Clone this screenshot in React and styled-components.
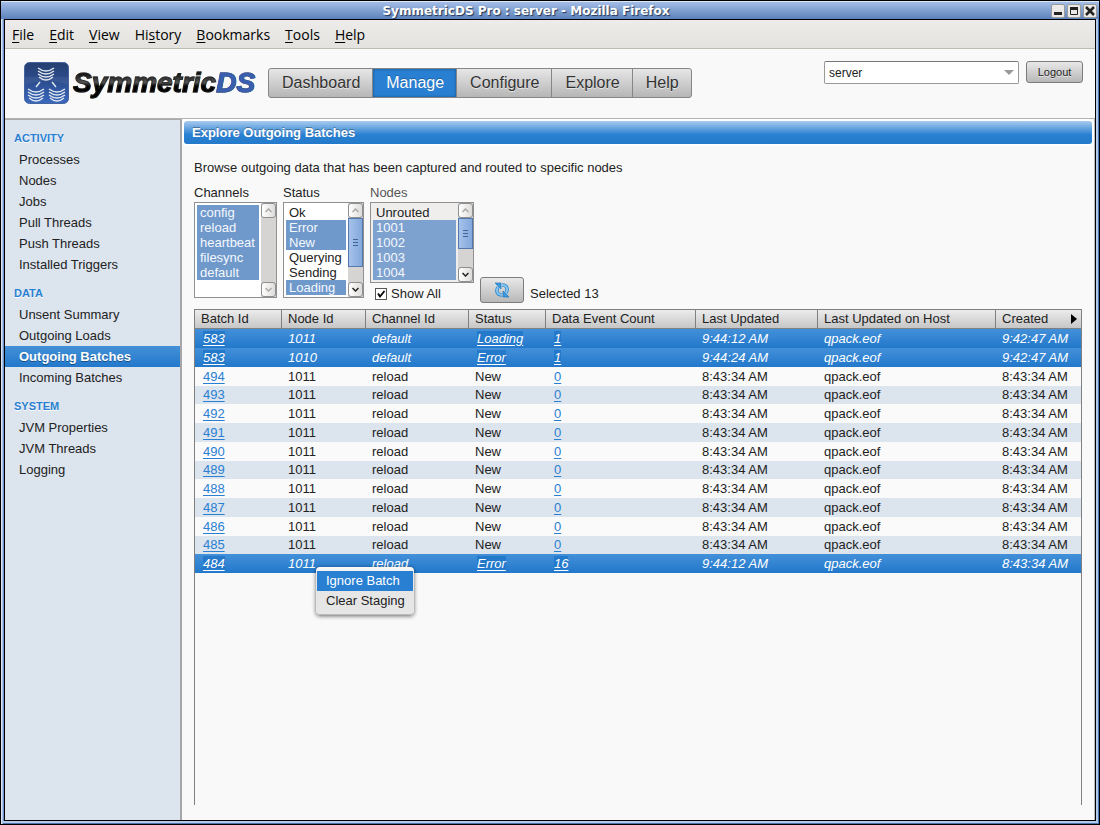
import React from "react";
import styled, { createGlobalStyle, css } from "styled-components";

const Global = createGlobalStyle`
  *, *::before, *::after { box-sizing: border-box; }
  body { margin: 0; font: 13px/18px "Liberation Sans", Arial, sans-serif; color: #222; }
  button, select, input { font: inherit; color: inherit; margin: 0; }
`;

const Frame = styled.div`
  min-height: 100vh;
  display: flex;
  flex-direction: column;
  background: #6f93c8;
  border: 1px solid #000;
  padding: 0 3px 3px;
  box-shadow: inset 1px 1px #dbe6f6, inset 2px 0 #a9c1e4, inset 0 -1px #4c72aa, inset -1px 0 #4c72aa, inset 0 -3px #b3caea, inset -3px 0 #b3caea;
`;
const TitleBar = styled.header`
  height: 18px;
  margin: 0 -3px;
  padding: 0 2px;
  display: grid;
  grid-template-columns: 48px 1fr 48px;
  align-items: center;
  border-top: 1px solid #dbe6f6;
  background: linear-gradient(#a3bde6, #5c82bb);
`;
const WindowTitle = styled.h1`
  grid-column: 2;
  margin: 0;
  padding-right: 48px;
  font: bold 12px/16px "DejaVu Sans", sans-serif;
  color: #fff;
  text-align: center;
  text-shadow: 1px 1px 1px #1d3557;
`;
const WindowButtons = styled.div`
  display: flex;
  gap: 2px;
  justify-content: flex-end;
`;
const WindowButton = styled.button`
  width: 14px;
  height: 14px;
  padding: 0;
  display: grid;
  place-items: center;
  border: 1px solid #9a9a9a;
  border-radius: 2px;
  background: #eceae8;
`;
const Content = styled.div`
  flex: 1;
  display: flex;
  flex-direction: column;
  border: 1px solid #000;
  background: #f9f9f9;
`;
const MenuBar = styled.nav`
  height: 29px;
  padding: 2px 7px 0;
  display: flex;
  align-items: center;
  gap: 15px;
  background: linear-gradient(#edecea, #e3e2df);
  border-bottom: 1px solid #bdbdb4;
`;
const MenuButton = styled.button`
  padding: 0;
  border: 0;
  background: none;
  font: 14px/18px "Open Sans", sans-serif;
  color: #000;
  u { text-underline-offset: 2px; }
`;
const AppHeader = styled.header`
  height: 70px;
  padding: 12px 12px 0 19px;
  display: flex;
  align-items: flex-start;
  border-bottom: 1px solid #b0b3b0;
`;
const Brand = styled.a`
  width: 244px;
  padding-top: 1px;
  display: flex;
  align-items: center;
  gap: 3px;
  text-decoration: none;
  svg { flex: none; }
`;
const BrandText = styled.span`
  font: italic bold 28px/32px "Liberation Sans", Arial, sans-serif;
  color: transparent;
  background: linear-gradient(#111 20%, #555 48%, #000 60%);
  background-clip: text;
  -webkit-text-stroke: 1px #222a;
`;
const BrandAccent = styled.span`
  color: #3a5fae;
  -webkit-text-stroke: 1px #3a5fae;
`;
const Tabs = styled.nav`
  display: flex;
  margin-top: 7px;
  border: 1px solid #868686;
  border-radius: 3px;
  background: linear-gradient(#e6e6e6, #b6b6b6);
`;
const Tab = styled.button`
  height: 28px;
  padding: 0 12px 0 13px;
  border: 0;
  border-right: 1px solid #868686;
  background: none;
  font-size: 16px;
  color: #333;
  text-shadow: 0 1px #fff9;
  &:last-child { border-right: 0; }
  ${(p) => p.$active && css`
    color: #fff;
    background: #2980d2;
    box-shadow: inset 0 0 3px #134f8c;
    text-shadow: 0 -1px #0004;
  `}
`;
const Session = styled.div`
  margin-left: auto;
  display: flex;
  gap: 7px;
`;
const Combo = styled.label`
  display: grid;
  align-items: center;
  > * { grid-area: 1 / 1; }
  svg { justify-self: end; margin-right: 5px; pointer-events: none; }
`;
const ComboSelect = styled.select`
  appearance: none;
  width: 195px;
  height: 23px;
  padding: 0 20px 0 4px;
  border: 1px solid #999;
  border-top-color: #777;
  border-radius: 2px;
  background: #fff;
  font-size: 12px;
`;
const PushButton = styled.button`
  width: ${(p) => p.$width};
  height: ${(p) => p.$height};
  padding: 0;
  display: grid;
  place-items: center;
  border: 1px solid #7c7c7c;
  border-radius: 3px;
  background: linear-gradient(#e8e8e8, #b8b8b8);
  font-size: 11px;
  text-shadow: 0 1px #fff9;
`;
const Body = styled.div`
  flex: 1;
  display: flex;
`;
const Sidebar = styled.nav`
  flex: none;
  width: 177px;
  background: #dce4ed;
  border-top: 1px solid #aaa;
  border-right: 2px solid #a4a6a8;
`;
const SideHeading = styled.h2`
  margin: 0;
  padding: 9px 9px 2px;
  font-size: 11px;
  line-height: 18px;
  color: #2980d2;
  text-shadow: 0 1px #fff;
`;
const SideLink = styled.a`
  display: block;
  padding: 0 14px;
  line-height: 21px;
  color: #222;
  text-decoration: none;
  ${(p) => p.$active && css`
    color: #fff;
    font-weight: bold;
    background: linear-gradient(#4490d8, #2278cb);
    text-shadow: 0 1px #0006;
  `}
`;
const Main = styled.main`
  flex: 1;
  min-width: 0;
  display: flex;
  flex-direction: column;
  padding: 2px 2px 15px;
  border-right: 1px solid #bbb;
`;
const PanelTitle = styled.h2`
  margin: 0;
  padding: 0 8px;
  font-size: 13px;
  line-height: 23px;
  color: #fff;
  text-shadow: 0 -1px #0005;
  border-radius: 3px;
  background: linear-gradient(#a8cbee, #2980d2 60%, #2479ca);
  box-shadow: 0 0 0 2px #fff;
`;
const PanelBody = styled.div`
  flex: 1;
  display: flex;
  flex-direction: column;
  padding: 15px 10px 0;
`;
const Intro = styled.p`
  margin: 0 0 6px;
`;
const Filters = styled.div`
  height: 120px;
  margin-bottom: 6px;
  display: flex;
  gap: 6px;
`;
const FilterGroup = styled.div`
  width: ${(p) => p.$width};
`;
const FilterLabel = styled.label`
  display: block;
  height: 19px;
  line-height: 20px;
  color: ${(p) => (p.$disabled ? "#555" : "#222")};
`;
const ListFrame = styled.div`
  height: ${(p) => p.$height};
  display: flex;
  border: 1px solid #909090;
  background: ${(p) => (p.$disabled ? "#efeeed" : "#fff")};
`;
const List = styled.select`
  flex: 1;
  min-width: 0;
  height: 100%;
  padding: 2px 2px 0;
  border: 0;
  outline: 0;
  overflow: hidden;
  background: transparent;
  scrollbar-width: none;
  option {
    min-height: 15px;
    height: 15px;
    padding: 0 3px;
    line-height: 15px;
    color: #222;
  }
  option:checked {
    color: #fff;
    -webkit-text-fill-color: #f4f8fd;
    background: ${(p) => (p.$disabled ? "linear-gradient(#7ea2d0, #7ea2d0)" : "linear-gradient(#7099cb, #7099cb)")};
  }
`;
const Track = styled.div`
  flex: none;
  width: 15px;
  display: flex;
  flex-direction: column;
  justify-content: space-between;
  background: #d5d4d2;
`;
const ArrowBox = styled.button`
  height: 15px;
  padding: 0;
  display: grid;
  place-items: center;
  border: 1px solid #8f8f8f;
  border-radius: 3px;
  background: linear-gradient(90deg, #fff, #dedcda);
`;
const Thumb = styled.div`
  height: ${(p) => p.$height};
  margin-bottom: auto;
  display: grid;
  place-items: center;
  border: 1px solid #5379ae;
  background: linear-gradient(90deg, #a5c2ea, #83a8dc);
`;
const CheckLabel = styled.label`
  display: flex;
  align-items: center;
  gap: 4px;
  margin-top: 2px;
  padding-left: 5px;
`;
const CheckBox = styled.span`
  display: grid;
  > * { grid-area: 1 / 1; }
  svg { pointer-events: none; }
`;
const CheckInput = styled.input`
  appearance: none;
  width: 12px;
  height: 12px;
  border: 1px solid #555;
  background: #fff;
`;
const Actions = styled.div`
  display: flex;
  align-items: flex-end;
  gap: 6px;
`;
const TableFrame = styled.div`
  flex: 1;
  border: 1px solid #808080;
  border-bottom: 0;
`;
const Table = styled.table`
  width: 100%;
  table-layout: fixed;
  border-collapse: separate;
  border-spacing: 0;
`;
const HeadCell = styled.th`
  width: ${(p) => p.$width};
  height: 19px;
  padding: 0 0 0 6px;
  text-align: left;
  font-weight: normal;
  line-height: 18px;
  white-space: nowrap;
  border-right: 1px solid #808080;
  border-bottom: 1px solid #808080;
  background: linear-gradient(#ececec, #c6c6c6);
  &:last-child { border-right: 0; }
`;
const HeadRow = styled.div`
  display: flex;
  align-items: center;
  justify-content: space-between;
  padding-right: 4px;
`;
const Row = styled.tr`
  height: 19px;
  background: #fafafa;
  &:nth-child(even) { background: #dce4ed; }
  &:nth-child(4n) { height: 18px; }
  ${(p) => p.$selected && css`
    &&& { background: linear-gradient(#4390d9, #2278cb); }
    color: #fff;
    font-style: italic;
    --link: #fff;
    --link-bg: #2479cb;
  `}
`;
const Cell = styled.td`
  position: relative;
  padding: 0 0 0 6px;
  line-height: 18px;
  white-space: nowrap;
`;
const CellLink = styled.a`
  margin-left: 2px;
  color: var(--link, #2980d2);
  background: var(--link-bg, transparent);
  text-underline-offset: 2px;
`;
const ContextMenu = styled.div`
  position: absolute;
  z-index: 1;
  top: 13px;
  left: 34px;
  width: 98px;
  padding: 4px 1px 3px;
  border-bottom: 1px solid #bbb;
  border-radius: 4px;
  background: linear-gradient(#fafafa, #e6e6e6 8px);
  box-shadow: 0 1px 4px #0009;
  font-style: normal;
`;
const ContextItem = styled.button`
  display: block;
  width: 100%;
  height: 20px;
  padding: 0 9px;
  border: 0;
  text-align: left;
  color: ${(p) => (p.$active ? "#fff" : "#222")};
  background: ${(p) => (p.$active ? "#2980d2" : "none")};
`;

const arcs = (x, y) =>
  [0, 3, 6, 9].map((d) => {
    const half = d > 6 ? 7 : 8;
    return <path key={d} d={`M${x - half} ${y + d}q${half} 6 ${half * 2} 0`} />;
  });

function LogoMark() {
  return (
    <svg width="46" height="42" viewBox="0 0 46 42" aria-hidden="true">
      <defs>
        <linearGradient id="mark" x2="0" y2="1">
          <stop offset="0" stopColor="#263f70" />
          <stop offset=".5" stopColor="#2d4f92" />
          <stop offset="1" stopColor="#3b69bf" />
        </linearGradient>
      </defs>
      <rect x=".5" y=".5" width="44" height="41" rx="5" fill="url(#mark)" stroke="#45639c" />
      <path d="M1 23q22-8 43 0v-8H1z" fill="#fff" opacity=".06" />
      <g fill="none" stroke="#e3e9ee" strokeWidth="1.4">
        {arcs(22, 6)}
        {arcs(12, 27)}
        {arcs(33, 27)}
        <path d="M16 20l-4 5M28 20l4 5" />
      </g>
    </svg>
  );
}

function Chevron({ up, dim }) {
  return (
    <svg width="7" height="5" viewBox="0 0 7 5" aria-hidden="true">
      <path d={up ? "M.5 4l3-3 3 3" : "M.5 1l3 3 3-3"} fill="none" stroke={dim ? "#aaa" : "#222"} strokeWidth="1.5" />
    </svg>
  );
}

function ListBox({ id, label, width, height = "96px", options, selected, thumb, disabled, children }) {
  return (
    <FilterGroup $width={width}>
      <FilterLabel htmlFor={id} $disabled={disabled}>{label}</FilterLabel>
      <ListFrame $height={height} $disabled={disabled}>
        <List id={id} multiple size={5} defaultValue={selected} $disabled={disabled}>
          {options.map((o) => <option key={o}>{o}</option>)}
        </List>
        <Track>
          <ArrowBox aria-label="Scroll up"><Chevron up dim /></ArrowBox>
          {thumb && (
            <Thumb $height={thumb}>
              <svg width="5" height="7" viewBox="0 0 5 7" aria-hidden="true">
                <path d="M0 .5h5M0 3.5h5M0 6.5h5" stroke="#41659a" />
              </svg>
            </Thumb>
          )}
          <ArrowBox aria-label="Scroll down"><Chevron dim={!thumb} /></ArrowBox>
        </Track>
      </ListFrame>
      {children}
    </FilterGroup>
  );
}

const menus = [["", "F", "ile"], ["", "E", "dit"], ["", "V", "iew"], ["Hi", "s", "tory"], ["", "B", "ookmarks"], ["", "T", "ools"], ["", "H", "elp"]];
const tabs = ["Dashboard", "Manage", "Configure", "Explore", "Help"];
const sections = [
  ["ACTIVITY", ["Processes", "Nodes", "Jobs", "Pull Threads", "Push Threads", "Installed Triggers"]],
  ["DATA", ["Unsent Summary", "Outgoing Loads", "Outgoing Batches", "Incoming Batches"]],
  ["SYSTEM", ["JVM Properties", "JVM Threads", "Logging"]],
];
const columns = [
  ["Batch Id", "87px"], ["Node Id", "84px"], ["Channel Id", "103px"], ["Status", "77px"],
  ["Data Event Count", "150px"], ["Last Updated", "122px"], ["Last Updated on Host", "178px"], ["Created", "auto"],
];
const batches = [
  { id: 583, node: 1011, channel: "default", status: "Loading", count: 1, updated: "9:44:12 AM", created: "9:42:47 AM", selected: true },
  { id: 583, node: 1010, channel: "default", status: "Error", count: 1, updated: "9:44:24 AM", created: "9:42:47 AM", selected: true },
  ...[494, 493, 492, 491, 490, 489, 488, 487, 486, 485].map((id) => ({
    id, node: 1011, channel: "reload", status: "New", count: 0, updated: "8:43:34 AM", created: "8:43:34 AM",
  })),
  { id: 484, node: 1011, channel: "reload", status: "Error", count: 16, updated: "9:44:12 AM", created: "8:43:34 AM", selected: true, menu: true },
];

export default function App() {
  return (
    <Frame>
      <Global />
      <TitleBar>
        <WindowTitle>SymmetricDS Pro : server - Mozilla Firefox</WindowTitle>
        <WindowButtons>
          <WindowButton aria-label="Minimize">
            <svg width="10" height="10"><path d="M1 7.5h8" stroke="#222" strokeWidth="3" /></svg>
          </WindowButton>
          <WindowButton aria-label="Maximize">
            <svg width="10" height="10"><path d="M1.5 2v6.500h7V2" fill="none" stroke="#222" /><path d="M1 2.500h8" stroke="#222" strokeWidth="3" /></svg>
          </WindowButton>
          <WindowButton aria-label="Close">
            <svg width="10" height="10"><path d="M1 1l8 8M9 1L1 9" stroke="#222" strokeWidth="2.500" /></svg>
          </WindowButton>
        </WindowButtons>
      </TitleBar>
      <Content>
        <MenuBar>
          {menus.map(([a, u, b]) => <MenuButton key={u + b}>{a}<u>{u}</u>{b}</MenuButton>)}
        </MenuBar>
        <AppHeader>
          <Brand href="#home">
            <LogoMark />
            <BrandText>Symmetric<BrandAccent>DS</BrandAccent></BrandText>
          </Brand>
          <Tabs>
            {tabs.map((t) => <Tab key={t} $active={t === "Manage"}>{t}</Tab>)}
          </Tabs>
          <Session>
            <Combo>
              <ComboSelect aria-label="Server" defaultValue="server"><option>server</option></ComboSelect>
              <svg width="10" height="5" aria-hidden="true"><path d="M0 0h10L5 5z" fill="#999" /></svg>
            </Combo>
            <PushButton $width="57px" $height="22px">Logout</PushButton>
          </Session>
        </AppHeader>
        <Body>
          <Sidebar>
            {sections.map(([title, items]) => (
              <React.Fragment key={title}>
                <SideHeading>{title}</SideHeading>
                {items.map((i) => <SideLink key={i} href="#view" $active={i === "Outgoing Batches"}>{i}</SideLink>)}
              </React.Fragment>
            ))}
          </Sidebar>
          <Main>
            <PanelTitle>Explore Outgoing Batches</PanelTitle>
            <PanelBody>
              <Intro>Browse outgoing data that has been captured and routed to specific nodes</Intro>
              <Filters>
                <ListBox id="channels" label="Channels" width="83px"
                  options={["config", "reload", "heartbeat", "filesync", "default"]}
                  selected={["config", "reload", "heartbeat", "filesync", "default"]} />
                <ListBox id="status" label="Status" width="81px" thumb="49px"
                  options={["Ok", "Error", "New", "Querying", "Sending", "Loading"]}
                  selected={["Error", "New", "Loading"]} />
                <ListBox id="nodes" label="Nodes" width="104px" height="81px" thumb="31px" disabled
                  options={["Unrouted", "1001", "1002", "1003", "1004"]}
                  selected={["1001", "1002", "1003", "1004"]}>
                  <CheckLabel>
                    <CheckBox>
                      <CheckInput type="checkbox" defaultChecked />
                      <svg width="12" height="12" aria-hidden="true"><path d="M3 5.500l2 3L9.500 3" fill="none" stroke="#000" strokeWidth="1.800" /></svg>
                    </CheckBox>
                    Show All
                  </CheckLabel>
                </ListBox>
                <Actions>
                  <PushButton $width="44px" $height="26px" aria-label="Refresh">
                    <svg width="16" height="16" viewBox="0 0 16 16" aria-hidden="true">
                      <g fill="none" stroke="#2f8bd0" strokeWidth="3.500">
                        <path d="M8 13C3.500 13 1.500 9.500 4 5" />
                        <path d="M8 3c4.500 0 6.500 3.500 4 8" />
                      </g>
                      <g fill="none" stroke="#8bc6ee" strokeWidth="1.800">
                        <path d="M8 13C3.500 13 1.500 9.500 4 5" />
                        <path d="M8 3c4.500 0 6.500 3.500 4 8" />
                      </g>
                      <path d="M1 1h6v6zM15 15H9V9z" fill="#3a9be0" stroke="#1f78bd" strokeWidth=".7" />
                    </svg>
                  </PushButton>
                  <span>Selected 13</span>
                </Actions>
              </Filters>
              <TableFrame>
                <Table>
                  <thead>
                    <tr>
                      {columns.map(([name, width]) => (
                        <HeadCell key={name} $width={width}>
                          {name === "Created" ? (
                            <HeadRow>
                              {name}
                              <svg width="6" height="10" aria-hidden="true"><path d="M0 0l6 5-6 5z" /></svg>
                            </HeadRow>
                          ) : name}
                        </HeadCell>
                      ))}
                    </tr>
                  </thead>
                  <tbody>
                    {batches.map((b, i) => (
                      <Row key={i} $selected={b.selected}>
                        <Cell><CellLink href="#batch">{b.id}</CellLink></Cell>
                        <Cell>
                          {b.node}
                          {b.menu && (
                            <ContextMenu>
                              <ContextItem $active>Ignore Batch</ContextItem>
                              <ContextItem>Clear Staging</ContextItem>
                            </ContextMenu>
                          )}
                        </Cell>
                        <Cell>{b.channel}</Cell>
                        <Cell>{b.selected ? <CellLink href="#status">{b.status}</CellLink> : b.status}</Cell>
                        <Cell><CellLink href="#events">{b.count}</CellLink></Cell>
                        <Cell>{b.updated}</Cell>
                        <Cell>qpack.eof</Cell>
                        <Cell>{b.created}</Cell>
                      </Row>
                    ))}
                  </tbody>
                </Table>
              </TableFrame>
            </PanelBody>
          </Main>
        </Body>
      </Content>
    </Frame>
  );
}
